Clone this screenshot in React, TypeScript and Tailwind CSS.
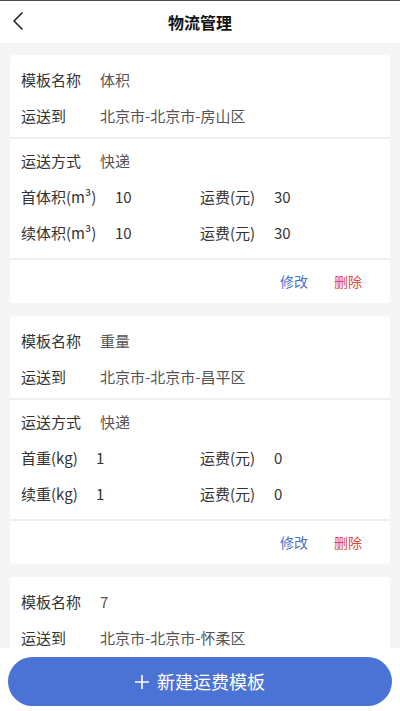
import React from "react";

type Tpl = {
  name: string;
  dest: string;
  method: string;
  first: [string, string];
  cont: [string, string];
  fee1: string;
  fee2: string;
};

const templates: Tpl[] = [
  {
    name: "体积",
    dest: "北京市-北京市-房山区",
    method: "快递",
    first: ["首体积(m³)", "10"],
    cont: ["续体积(m³)", "10"],
    fee1: "30",
    fee2: "30",
  },
  {
    name: "重量",
    dest: "北京市-北京市-昌平区",
    method: "快递",
    first: ["首重(kg)", "1"],
    cont: ["续重(kg)", "1"],
    fee1: "0",
    fee2: "0",
  },
  {
    name: "7",
    dest: "北京市-北京市-怀柔区",
    method: "快递",
    first: ["首重(kg)", "1"],
    cont: ["续重(kg)", "1"],
    fee1: "0",
    fee2: "0",
  },
];

const font = { fontFamily: '"Noto Sans CJK SC", "Noto Sans", sans-serif' };

function Row({ label, value }: { label: string; value: string }) {
  return (
    <div className="flex h-9 items-center">
      <span className="w-[79px] text-[#333]">{label}</span>
      <span className="text-[#555]">{value}</span>
    </div>
  );
}

// 首重 / 续重 row with its freight column
function FeeRow({ label, value, fee, labelW }: { label: string; value: string; fee: string; labelW: string }) {
  return (
    <div className="flex h-9 items-center">
      <span className={labelW + " text-[#333]"}>{label}</span>
      <span className="flex-1 text-[#333]">{value}</span>
      <span className="w-[74px] text-[#333]">运费(元)</span>
      <span className="w-[105px] text-[#333]">{fee}</span>
    </div>
  );
}

function Card({ t }: { t: Tpl }) {
  const isVol = t.first[0].includes("体积");
  const lw = isVol ? "w-[94px]" : "w-[75px]";
  return (
    <div className="mx-[10px] mb-[13px] rounded-[4px] bg-white text-[15px]">
      <div className="border-b-2 border-[#efefef] px-[11px] pt-[7px] pb-[3px]">
        <Row label="模板名称" value={t.name} />
        <Row label="运送到" value={t.dest} />
      </div>
      <div className="border-b-2 border-[#efefef] px-[11px] pt-[4px] pb-[7px]">
        <Row label="运送方式" value={t.method} />
        <FeeRow label={t.first[0]} value={t.first[1]} fee={t.fee1} labelW={lw} />
        <FeeRow label={t.cont[0]} value={t.cont[1]} fee={t.fee2} labelW={lw} />
      </div>
      <div className="flex h-[43px] items-center justify-end gap-[26px] pr-[28px] text-[14px]">
        <span className="text-[#4a72c8]">修改</span>
        <span className="text-[#e0473f]">删除</span>
      </div>
    </div>
  );
}

export default function App() {
  return (
    <div className="flex h-[711px] w-full flex-col overflow-hidden bg-[#f5f5f5]" style={font}>
      <div className="relative flex h-[43px] shrink-0 items-center justify-center border-t border-[#4a4a4a] bg-white">
        <svg className="absolute left-[11px] top-[10px]" width="14" height="20" viewBox="0 0 14 20" fill="none">
          <path d="M11 2 L3 10 L11 18" stroke="#222" strokeWidth="1.6" strokeLinecap="round" strokeLinejoin="round" />
        </svg>
        <span className="text-[16px] font-bold text-[#111]">物流管理</span>
      </div>
      <div className="flex-1 overflow-hidden pt-[12px]">
        {templates.map((t, i) => (
          <Card key={i} t={t} />
        ))}
      </div>
      <div className="shrink-0 bg-white px-2 pt-[9px] pb-[5px]">
        <button className="flex h-[49px] w-full items-center justify-center gap-[8px] rounded-full bg-[#4b73d6] text-[18px] text-white">
          <svg width="14" height="14" viewBox="0 0 14 14">
            <path d="M7 0 V14 M0 7 H14" stroke="#fff" strokeWidth="1.6" />
          </svg>
          <span>新建运费模板</span>
        </button>
      </div>
    </div>
  );
}
